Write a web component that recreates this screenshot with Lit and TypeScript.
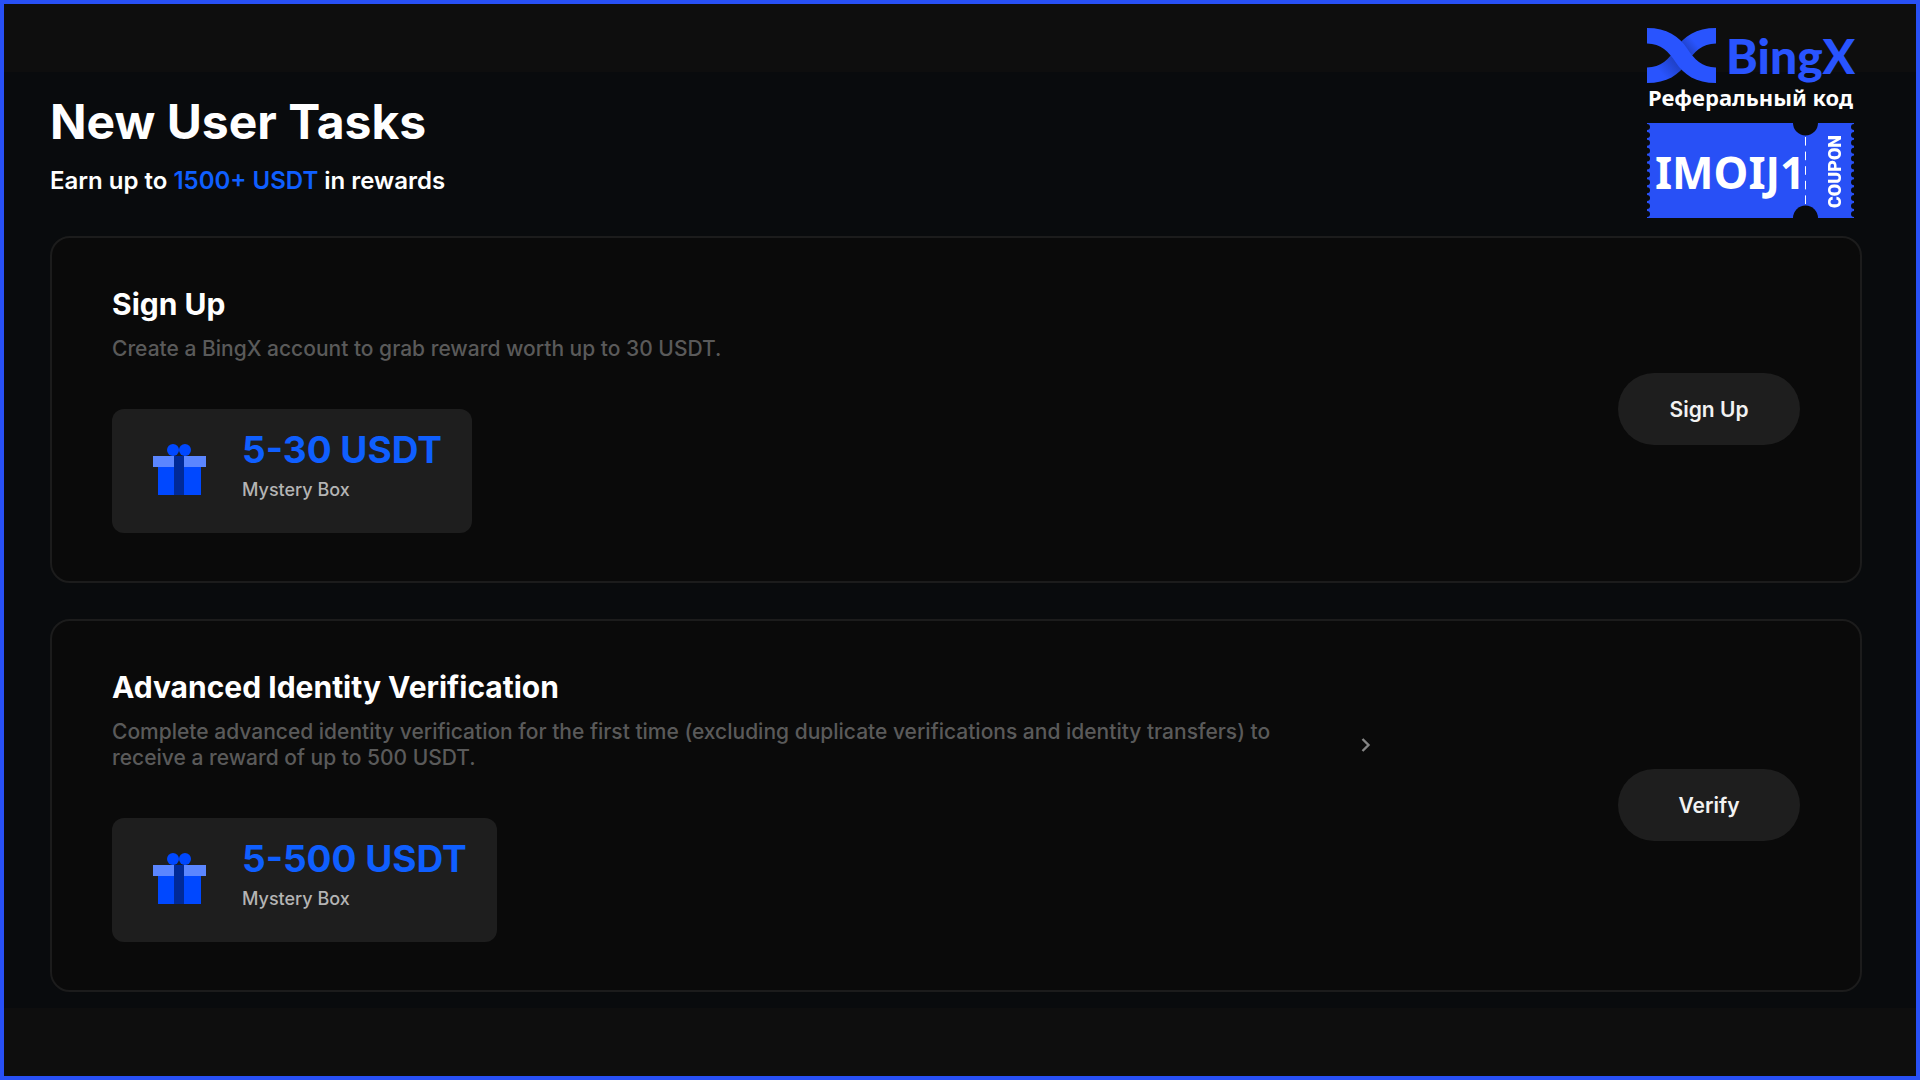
import { LitElement, html, css, svg, nothing } from "lit";
import { customElement, property } from "lit/decorators.js";

interface Task {
  title: string;
  description: string;
  amount: string;
  reward: string;
  action: string;
  more: boolean;
}

const TASKS: Task[] = [
  {
    title: "Sign Up",
    description: "Create a BingX account to grab reward worth up to 30 USDT.",
    amount: "5-30 USDT",
    reward: "Mystery Box",
    action: "Sign Up",
    more: false,
  },
  {
    title: "Advanced Identity Verification",
    description:
      "Complete advanced identity verification for the first time (excluding duplicate verifications and identity transfers) to receive a reward of up to 500 USDT.",
    amount: "5-500 USDT",
    reward: "Mystery Box",
    action: "Verify",
    more: true,
  },
];

@customElement("task-card")
export class TaskCard extends LitElement {
  @property({ attribute: false }) task!: Task;

  static styles = css`
    :host {
      display: block;
    }
    .card {
      box-sizing: border-box;
      display: flex;
      align-items: center;
      justify-content: space-between;
      gap: 32px;
      padding: 46px 60px 48px;
      border: 2px solid #1c1c1c;
      border-radius: 20px;
      background: #0a0a0a;
    }
    .body {
      display: flex;
      flex-direction: column;
      align-items: flex-start;
    }
    .title {
      margin: 0 0 12px;
      font-size: 30px;
      line-height: 40px;
      font-weight: 700;
      color: #ffffff;
    }
    .info {
      display: flex;
      align-items: center;
      gap: 54px;
      margin-bottom: 47px;
    }
    .description {
      margin: 0;
      max-width: 1170px;
      font-size: 21px;
      line-height: 26px;
      font-weight: 500;
      color: #5a5a5a;
    }
    .more {
      display: flex;
      padding: 0;
      border: 0;
      background: none;
      cursor: pointer;
    }
    .reward {
      box-sizing: border-box;
      display: flex;
      align-items: center;
      gap: 36px;
      min-height: 124px;
      padding: 0 30px 0 41px;
      border-radius: 12px;
      background: #1e1e1e;
    }
    .gift {
      display: block;
    }
    .text {
      display: flex;
      flex-direction: column;
      gap: 4px;
      padding-bottom: 14px;
    }
    .amount {
      font-size: 37px;
      line-height: 48px;
      font-weight: 700;
      color: #0f5fff;
    }
    .label {
      font-size: 18px;
      line-height: 24px;
      font-weight: 500;
      color: #b4b4b4;
    }
    .action {
      flex: none;
      min-width: 182px;
      min-height: 72px;
      padding: 2px 24px 0;
      border: 0;
      border-radius: 36px;
      background: #1e1e1e;
      color: #f2f2f2;
      font: 600 21px/28px Inter, "Liberation Sans", sans-serif;
      cursor: pointer;
    }
  `;

  render() {
    const t = this.task;
    return html`
      <article class="card">
        <div class="body">
          <h2 class="title">${t.title}</h2>
          <div class="info">
            <p class="description">${t.description}</p>
            ${t.more
              ? html`<button class="more" aria-label="Details">
                  <svg width="60" height="20" viewBox="0 0 60 20" fill="none">
                    <path d="M26.500 4l6 6-6 6" stroke="#858585" stroke-width="2.400" />
                  </svg>
                </button>`
              : nothing}
          </div>
          <div class="reward">
            <svg class="gift" width="53" height="54" viewBox="0 0 53 54" aria-hidden="true">
              <rect x="5" y="23" width="43" height="28" fill="#0048ff" />
              <rect x="0" y="12" width="53" height="11" fill="#5b86ff" />
              <rect x="21" y="12" width="10" height="39" fill="#002a98" />
              <circle cx="20" cy="6" r="6" fill="#0048ff" />
              <circle cx="32" cy="6" r="6" fill="#0048ff" />
            </svg>
            <div class="text">
              <span class="amount">${t.amount}</span>
              <span class="label">${t.reward}</span>
            </div>
          </div>
        </div>
        <button class="action">${t.action}</button>
      </article>
    `;
  }
}

@customElement("brand-badge")
export class BrandBadge extends LitElement {
  static styles = css`
    :host {
      display: block;
    }
    .badge {
      display: flex;
      flex-direction: column;
      width: 207px;
    }
    .logo {
      display: flex;
      gap: 10px;
      height: 55px;
    }
    .mark {
      flex: none;
      display: block;
    }
    .word {
      font: 900 48px/56px Lato, sans-serif;
      color: #2954fe;
    }
    .caption {
      margin: 0 0 12px;
      text-align: center;
      white-space: nowrap;
      font: 700 22px/28px "Noto Sans", sans-serif;
      color: #ffffff;
    }
    .coupon {
      display: grid;
      grid-template-areas: "all";
      height: 95px;
    }
    .shape,
    .content {
      grid-area: all;
    }
    .content {
      display: flex;
      align-items: center;
      justify-content: space-between;
      padding: 2px 7px 0 8px;
      color: #ffffff;
    }
    .code {
      font: 700 44px/60px "Noto Sans", sans-serif;
    }
    .kind {
      writing-mode: vertical-rl;
      transform: rotate(180deg);
      font: 900 18px/24px Roboto, sans-serif;
    }
  `;

  private teeth() {
    return Array.from({ length: 12 }, (_, i) => {
      const cy = 4 + i * 7.9;
      return svg`<circle cx="0" cy=${cy} r="3" fill="black" /><circle cx="207" cy=${cy} r="3" fill="black" />`;
    });
  }

  render() {
    return html`
      <div class="badge">
        <div class="logo">
          <svg class="mark" width="69" height="55" viewBox="0 0 69 55" aria-hidden="true">
            <defs>
              <linearGradient id="shade" x1="14" y1="45" x2="55" y2="10" gradientUnits="userSpaceOnUse">
                <stop offset="0" stop-color="#2954fe" />
                <stop offset="0.35" stop-color="#1f40c4" />
                <stop offset="0.62" stop-color="#1f40c4" />
                <stop offset="0.85" stop-color="#2954fe" />
              </linearGradient>
            </defs>
            <path
              d="M69 0v15.500C55 15.500 47 24 40.500 34C32 47 20 55 0 55V39.500C14 39.500 22 31 28.500 21C37 8 49 0 69 0z"
              fill="url(#shade)"
            />
            <path
              d="M0 0v15.500C14 15.500 22 24 28.500 34C37 47 49 55 69 55V39.500C55 39.500 47 31 40.500 21C32 8 20 0 0 0z"
              fill="#2954fe"
            />
          </svg>
          <span class="word">BingX</span>
        </div>
        <p class="caption">Реферальный код</p>
        <div class="coupon">
          <svg class="shape" width="207" height="95" viewBox="0 0 207 95" aria-hidden="true">
            <mask id="cut">
              <rect width="207" height="95" fill="white" />
              ${this.teeth()}
              <circle cx="158.500" cy="0" r="12.500" fill="black" />
              <circle cx="158.500" cy="95" r="12.500" fill="black" />
            </mask>
            <rect width="207" height="95" fill="#2850f6" mask="url(#cut)" />
            <path d="M158.500 14v67" stroke="#ffffff" stroke-width="1" stroke-dasharray="8.600 6" />
          </svg>
          <div class="content">
            <span class="code">IMOIJ1</span>
            <span class="kind">COUPON</span>
          </div>
        </div>
      </div>
    `;
  }
}

@customElement("app-root")
export class AppRoot extends LitElement {
  static styles = css`
    :host {
      display: block;
      font-family: Inter, "Liberation Sans", sans-serif;
    }
    .frame {
      position: relative;
      box-sizing: border-box;
      min-height: 100vh;
      padding-top: 68px;
      border: 4px solid #2850f6;
      background: #0e0e0e;
    }
    .page {
      padding: 20px 54px 16px 46px;
      background: #090b0d;
    }
    .heading {
      margin: 0 0 14px;
      font-size: 48px;
      line-height: 60px;
      font-weight: 700;
      color: #ffffff;
    }
    .lead {
      margin: 0 0 40px;
      font-size: 24px;
      line-height: 30px;
      font-weight: 600;
      color: #ffffff;
    }
    .highlight {
      color: #0f5fff;
    }
    .tasks {
      display: flex;
      flex-direction: column;
      gap: 36px;
    }
    .brand {
      position: absolute;
      top: 24px;
      right: 62px;
    }
  `;

  render() {
    return html`
      <div class="frame">
        <main class="page">
          <h1 class="heading">New User Tasks</h1>
          <p class="lead">
            Earn up to <span class="highlight">1500+ USDT</span> in rewards
          </p>
          <div class="tasks">
            ${TASKS.map((task) => html`<task-card .task=${task}></task-card>`)}
          </div>
        </main>
        <brand-badge class="brand"></brand-badge>
      </div>
    `;
  }
}
